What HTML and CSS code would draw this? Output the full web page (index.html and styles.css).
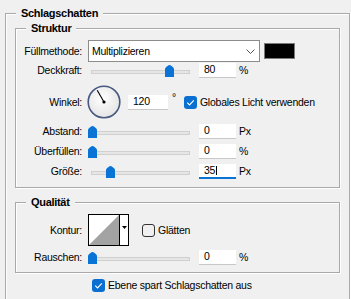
FILE: index.html
```html
<!DOCTYPE html>
<html>
  <head>
    <title>Schlagschatten</title>
    <link rel="stylesheet" href="styles.css">
  </head>
  <body>
    <div class="panel">
      <div class="title"><span>Schlagschatten</span></div>
      <div class="body panel-body">

        <div class="group struktur">
          <div class="title"><span>Struktur</span></div>
          <div class="body group-body">

            <div class="row row-blend">
              <span class="lbl">Füllmethode:</span>
              <div class="select">
                <span>Multiplizieren</span>
                <svg class="chevron" width="9" height="5" viewBox="0 0 9 5">
                  <path d="M0.5 0.5 L4.5 4.5 L8.5 0.5" fill="none" stroke="#555" stroke-width="1"/>
                </svg>
              </div>
              <div class="swatch"></div>
            </div>

            <div class="row">
              <span class="lbl">Deckkraft:</span>
              <div class="slider">
                <div class="track"></div>
                <svg class="thumb" style="left: 77px" width="9" height="12" viewBox="0 0 9 12">
                  <path d="M0 4 Q0 3 1.2 2 L3.5 0.3 Q4.5 -0.3 5.5 0.3 L7.8 2 Q9 3 9 4 V12 H0 Z" fill="#0a74d6"/>
                </svg>
              </div>
              <div class="field">80</div>
              <span class="unit">%</span>
            </div>

            <div class="row row-angle">
              <span class="lbl">Winkel:</span>
              <svg class="dial" width="34" height="34" viewBox="0 0 34 34">
                <defs>
                  <radialGradient id="dialfill" cx="0.45" cy="0.4" r="0.6">
                    <stop offset="0" stop-color="#ffffff"/>
                    <stop offset="1" stop-color="#e4e4e4"/>
                  </radialGradient>
                </defs>
                <circle cx="17" cy="17" r="15.8" fill="url(#dialfill)" stroke="#46587f" stroke-width="1.6"/>
                <line x1="17" y1="17" x2="10.2" y2="5.2" stroke="#000" stroke-width="1.1"/>
                <circle cx="17" cy="17" r="1.6" fill="#000"/>
              </svg>
              <div class="field field-angle">120</div>
              <span class="deg">°</span>
              <div class="check">
                <span class="box on">
                  <svg width="13" height="13" viewBox="0 0 13 13">
                    <path d="M3.2 6.6 L5.5 8.9 L9.8 4.3" fill="none" stroke="#fff" stroke-width="1.1"/>
                  </svg>
                </span>
                <span>Globales Licht verwenden</span>
              </div>
            </div>

            <div class="row row-gap">
              <span class="lbl">Abstand:</span>
              <div class="slider">
                <div class="track"></div>
                <svg class="thumb" style="left: 0px" width="9" height="12" viewBox="0 0 9 12">
                  <path d="M0 4 Q0 3 1.2 2 L3.5 0.3 Q4.5 -0.3 5.5 0.3 L7.8 2 Q9 3 9 4 V12 H0 Z" fill="#0a74d6"/>
                </svg>
              </div>
              <div class="field">0</div>
              <span class="unit">Px</span>
            </div>

            <div class="row row-gap2">
              <span class="lbl">Überfüllen:</span>
              <div class="slider">
                <div class="track"></div>
                <svg class="thumb" style="left: 0px" width="9" height="12" viewBox="0 0 9 12">
                  <path d="M0 4 Q0 3 1.2 2 L3.5 0.3 Q4.5 -0.3 5.5 0.3 L7.8 2 Q9 3 9 4 V12 H0 Z" fill="#0a74d6"/>
                </svg>
              </div>
              <div class="field">0</div>
              <span class="unit">%</span>
            </div>

            <div class="row row-gap2">
              <span class="lbl">Größe:</span>
              <div class="slider">
                <div class="track"></div>
                <svg class="thumb" style="left: 18px" width="9" height="12" viewBox="0 0 9 12">
                  <path d="M0 4 Q0 3 1.2 2 L3.5 0.3 Q4.5 -0.3 5.5 0.3 L7.8 2 Q9 3 9 4 V12 H0 Z" fill="#0a74d6"/>
                </svg>
              </div>
              <div class="field focus">35<span class="caret"></span></div>
              <span class="unit">Px</span>
            </div>
          </div>
        </div>

        <div class="group qualitaet">
          <div class="title"><span>Qualität</span></div>
          <div class="body group-body quality-body">

            <div class="row row-contour">
              <span class="lbl">Kontur:</span>
              <div class="contour">
                <svg class="curve" width="30" height="30" viewBox="0 0 30 30">
                  <rect width="30" height="30" fill="#fff"/>
                  <path d="M0 30 L30 0 V30 Z" fill="#a3a3a3"/>
                </svg>
                <div class="contour-drop">
                  <svg width="5" height="3" viewBox="0 0 5 3">
                    <path d="M0 0 H5 L2.5 3 Z" fill="#000"/>
                  </svg>
                </div>
              </div>
              <div class="check check-smooth">
                <span class="box"></span>
                <span>Glätten</span>
              </div>
            </div>

            <div class="row row-noise">
              <span class="lbl">Rauschen:</span>
              <div class="slider">
                <div class="track"></div>
                <svg class="thumb" style="left: 0px" width="9" height="12" viewBox="0 0 9 12">
                  <path d="M0 4 Q0 3 1.2 2 L3.5 0.3 Q4.5 -0.3 5.5 0.3 L7.8 2 Q9 3 9 4 V12 H0 Z" fill="#0a74d6"/>
                </svg>
              </div>
              <div class="field">0</div>
              <span class="unit">%</span>
            </div>
          </div>
        </div>

        <div class="check knockout">
          <span class="box on">
            <svg width="13" height="13" viewBox="0 0 13 13">
              <path d="M3.2 6.6 L5.5 8.9 L9.8 4.3" fill="none" stroke="#fff" stroke-width="1.1"/>
            </svg>
          </span>
          <span>Ebene spart Schlagschatten aus</span>
        </div>
      </div>
    </div>
  </body>
</html>
```

FILE: styles.css
```css
html,
body {
  margin: 0;
  overflow: hidden;
}
body {
  background: #f0f0f0;
  font-family: "Liberation Sans", Arial, sans-serif;
  font-size: 10.5px;
  letter-spacing: -0.25px;
  color: #000;
}

/* group box: title line + bordered body, etched like a windows groupbox */
.title {
  display: flex;
  height: 16px;
  line-height: 16px;
  font-weight: bold;
  font-size: 11px;
  letter-spacing: -0.3px;
}
.title span {
  padding: 0 5px;
}
.title::before,
.title::after {
  content: "";
  margin-top: 8px;
  border-top: 1px solid #a9a9a9;
  box-shadow: inset 0 1px 0 #fff;
}
.title::before {
  width: 10px;
  flex-shrink: 0;
  border-left: 1px solid #a9a9a9;
  box-shadow: inset 1px 1px 0 #fff;
}
.title::after {
  flex: 1;
  border-right: 1px solid #a9a9a9;
  box-shadow: inset 0 1px 0 #fff, 1px 0 0 #fff;
}
.body {
  border: 1px solid #a9a9a9;
  border-top: none;
  box-shadow: 1px 1px 0 #fff, inset 1px 0 0 #fff;
}

.panel {
  width: 345px;
  margin: 5px 1px 0 5px;
}
.panel-body {
  padding: 0 9px 6px 9px;
}
.struktur {
  margin-top: -1px;
}
.group-body {
  padding: 4px 0 8px 0;
}
.qualitaet {
  margin-top: 6px;
}
.quality-body {
  padding-bottom: 7px;
}

.row {
  display: flex;
  align-items: center;
  height: 16px;
}
.lbl {
  width: 66px;
  margin-right: 6px;
  text-align: right;
  flex-shrink: 0;
  white-space: nowrap;
}
.row-blend {
  height: 22px;
}
.select {
  box-sizing: border-box;
  width: 172px;
  height: 22px;
  border: 1px solid #8c8c8c;
  background: white;
  display: flex;
  align-items: center;
  justify-content: space-between;
  padding: 0 4px 0 3px;
}
.swatch {
  box-sizing: border-box;
  width: 31px;
  height: 16px;
  margin-left: 4px;
  border: 1px solid #7a7a7a;
  background: #000;
}
.slider {
  position: relative;
  width: 105px;
  height: 16px;
  flex-shrink: 0;
}
.track {
  position: absolute;
  left: 3px;
  right: 3px;
  top: 8px;
  height: 4px;
  box-sizing: border-box;
  border: 1px solid #d0d0d0;
  background: #e6e6e6;
}
.thumb {
  position: absolute;
  top: 3px;
}
.field {
  box-sizing: border-box;
  width: 37px;
  height: 15px;
  margin-left: 6px;
  padding: 0 5px;
  background: white;
  border-bottom: 1px solid #c8c8c8;
  line-height: 15px;
  display: flex;
  align-items: center;
}
.field.focus {
  border-bottom: 2px solid #0a74d6;
}
.caret {
  display: inline-block;
  width: 1px;
  height: 9px;
  margin-left: 1px;
  background: #000;
}
.unit {
  margin-left: 3px;
}
.row-angle {
  height: 36px;
  margin-top: 6px;
}
.dial {
  margin-left: -1px;
  flex-shrink: 0;
}
.field-angle {
  width: 40px;
  margin-left: 7px;
}
.deg {
  align-self: flex-start;
  margin: 8px 0 0 4px;
  line-height: 10px;
}
.check {
  display: flex;
  align-items: center;
  gap: 3px;
  white-space: nowrap;
}
.row-angle .check {
  margin-left: 8px;
}
.box {
  box-sizing: border-box;
  width: 13px;
  height: 13px;
  border: 1px solid #333;
  border-radius: 3px;
  display: flex;
}
.box.on {
  border: none;
  background: #0a6fd0;
}
.row-gap {
  margin-top: 3px;
}
.row-gap2 {
  margin-top: 4px;
}
.row-contour {
  height: 32px;
}
.contour {
  box-sizing: border-box;
  width: 41px;
  height: 32px;
  border: 1px solid #000;
  display: flex;
}
.curve {
  display: block;
}
.contour-drop {
  flex: 1;
  border-left: 1px solid #000;
  background: #fff;
  display: flex;
  justify-content: center;
  padding-top: 11px;
}
.check-smooth {
  margin-left: 13px;
}
.row-noise {
  margin-top: 3px;
}
.knockout {
  height: 16px;
  margin: 4px 0 0 77px;
}
```
